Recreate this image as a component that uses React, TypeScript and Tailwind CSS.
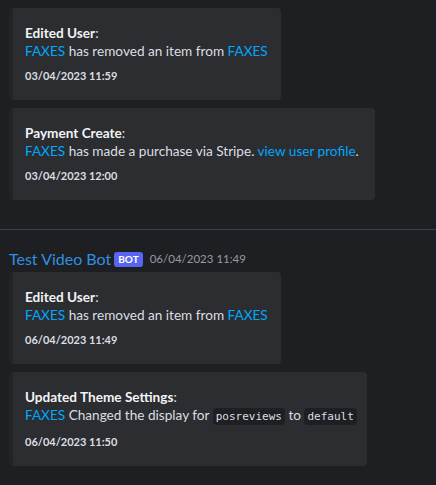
type EmbedProps = {
  title: string;
  time: string;
  width: string;
  children: React.ReactNode;
};

function Embed({ title, time, width, children }: EmbedProps) {
  return (
    <div className={`${width} rounded-[4px] border-l-4 border-[#232428] bg-[#2b2d31] pl-3 pr-4 pt-4 pb-4 whitespace-nowrap`}>
      <div className="text-[13.6px] leading-[18px] text-[#dbdee1]">
        <span className="font-bold text-[#f2f3f5]">{title}</span>:
      </div>
      <div className="text-[13.6px] leading-[18px] text-[#dbdee1]">{children}</div>
      <div className="mt-2 text-[11px] font-bold leading-[16px] text-[#dbdee1]">{time}</div>
    </div>
  );
}

const Link = ({ children }: { children: React.ReactNode }) => (
  <span className="text-[#00a8fc]">{children}</span>
);

const Code = ({ children }: { children: React.ReactNode }) => (
  <code className="rounded-[4px] bg-[#1e1f22] px-[3px] py-[2px] font-['DejaVu_Sans_Mono',monospace] text-[11px] text-[#dbdee1]">
    {children}
  </code>
);

export default function App() {
  return (
    <div className="h-[485px] w-full overflow-hidden bg-[#1e1f22] font-['Lato',sans-serif]">
      <div className="flex flex-col items-start gap-[8px] pl-[9px] pt-2">
        <Embed title="Edited User" time="03/04/2023 11:59" width="w-[272px]">
          <Link>FAXES</Link> has removed an item from <Link>FAXES</Link>
        </Embed>
        <Embed title="Payment Create" time="03/04/2023 12:00" width="w-[366px]">
          <Link>FAXES</Link> has made a purchase via Stripe. <Link>view user profile</Link>.
        </Embed>
      </div>

      <div className="mt-[29px] h-px w-full bg-[#3f4147]" />

      <div className="flex items-center gap-2 pl-[9px] pt-[19px]">
        <span className="text-[16px] leading-[20px] text-[#2f8fe0]">Test Video Bot</span>
        <span className="-ml-[5px] rounded-[3px] bg-[#5865f2] px-[4px] text-[10px] font-bold leading-[15px] text-white">
          BOT
        </span>
        <span className="-ml-[1px] text-[11.5px] leading-[16px] text-[#949ba4]">06/04/2023 11:49</span>
      </div>

      <div className="flex flex-col items-start gap-[8px] pl-[9px] pt-[3px]">
        <Embed title="Edited User" time="06/04/2023 11:49" width="w-[272px]">
          <Link>FAXES</Link> has removed an item from <Link>FAXES</Link>
        </Embed>
        <Embed title="Updated Theme Settings" time="06/04/2023 11:50" width="w-[358px]">
          <Link>FAXES</Link> Changed the display for <Code>posreviews</Code> to <Code>default</Code>
        </Embed>
      </div>
    </div>
  );
}
